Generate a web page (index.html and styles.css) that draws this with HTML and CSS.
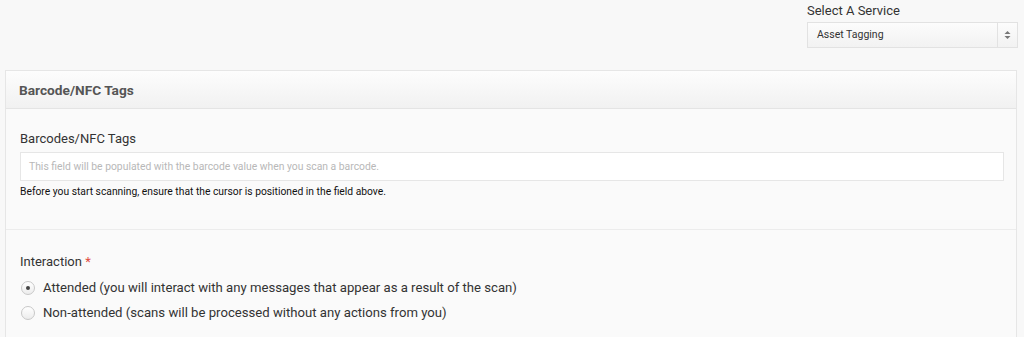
FILE: index.html
```html
<!DOCTYPE html>
<html>
<head>
<meta charset="utf-8">
<link rel="stylesheet" href="styles.css">
</head>
<body>
<div class="topbar">
  <div class="service">
    <div class="service-label">Select A Service</div>
    <div class="select">
      <span class="select-value">Asset Tagging</span>
      <span class="select-arrows">
        <svg width="7" height="10" viewBox="0 0 7 10"><path d="M3.5 1 L6.5 4 H0.5 Z" fill="#777"/><path d="M3.5 9 L6.5 6 H0.5 Z" fill="#777"/></svg>
      </span>
    </div>
  </div>
</div>
<div class="panel">
  <div class="panel-header">Barcode/NFC Tags</div>
  <div class="panel-section">
    <div class="label">Barcodes/NFC Tags</div>
    <div class="input">This field will be populated with the barcode value when you scan a barcode.</div>
    <div class="help">Before you start scanning, ensure that the cursor is positioned in the field above.</div>
  </div>
  <div class="panel-section second">
    <div class="label">Interaction <span class="req">*</span></div>
    <div class="radio-row"><span class="radio checked"></span><span>Attended (you will interact with any messages that appear as a result of the scan)</span></div>
    <div class="radio-row"><span class="radio"></span><span>Non-attended (scans will be processed without any actions from you)</span></div>
  </div>
</div>
</body>
</html>
```
FILE: styles.css
```css
html, body {
  margin: 0;
  padding: 0;
  background: #f8f8f8;
  font-family: Roboto, "Liberation Sans", sans-serif;
  color: #333;
  overflow: hidden;
  height: 337px;
}
.topbar {
  display: flex;
  justify-content: flex-end;
  padding: 3px 6px 0 0;
  height: 70px;
  box-sizing: border-box;
}
.service {
  width: 211px;
}
.service-label {
  font-size: 13px;
  line-height: 16px;
  color: #333;
  margin-bottom: 3px;
}
.select {
  display: flex;
  height: 26px;
  box-sizing: border-box;
  border: 1px solid #e2e2e2;
  background: linear-gradient(#fcfcfc, #f2f2f2);
}
.select-value {
  flex: 1;
  font-size: 10.5px;
  line-height: 24px;
  padding-left: 9px;
  color: #333;
}
.select-arrows {
  width: 19px;
  border-left: 1px solid #e2e2e2;
  display: flex;
  align-items: center;
  justify-content: center;
}
.panel {
  margin: 0 5px 0 5px;
  border: 1px solid #e6e6e6;
  border-bottom: none;
  background: #fafafa;
  width: 1012px;
  height: 280px;
  box-sizing: border-box;
}
.panel-header {
  height: 38px;
  box-sizing: border-box;
  border-bottom: 1px solid #e4e4e4;
  background: linear-gradient(#fdfdfd, #f1f1f1);
  font-weight: bold;
  font-size: 13.7px;
  color: #555;
  padding: 11px 0 0 13px;
}
.panel-section {
  padding: 22px 14px 0 14px;
  height: 121px;
  box-sizing: border-box;
  border-bottom: 1px solid #ececec;
}
.panel-section.second {
  padding-top: 24px;
  border-bottom: none;
  height: auto;
}
.label {
  font-size: 13px;
  line-height: 16px;
  color: #333;
}
.req {
  color: #e04a3f;
}
.input {
  margin-top: 5px;
  height: 29px;
  box-sizing: border-box;
  border: 1px solid #e6e6e6;
  background: #fff;
  font-size: 10.35px;
  line-height: 27px;
  color: #b8b8b8;
  padding-left: 8px;
  width: 984px;
}
.help {
  font-size: 10.3px;
  color: #111;
  margin-top: 4px;
  line-height: 14px;
}
.radio-row {
  display: flex;
  align-items: center;
  font-size: 13.15px;
  line-height: 16px;
  color: #333;
  margin-top: 10px;
}
.radio-row + .radio-row {
  margin-top: 9px;
}
.radio {
  width: 14px;
  height: 14px;
  border-radius: 50%;
  border: 1px solid #c8c8c8;
  background: linear-gradient(#fff, #ececec);
  box-sizing: border-box;
  margin: 0 8px 0 1px;
  position: relative;
}
.radio.checked::after {
  content: "";
  position: absolute;
  left: 4px;
  top: 4px;
  width: 4px;
  height: 4px;
  border-radius: 50%;
  background: #444;
}
```
